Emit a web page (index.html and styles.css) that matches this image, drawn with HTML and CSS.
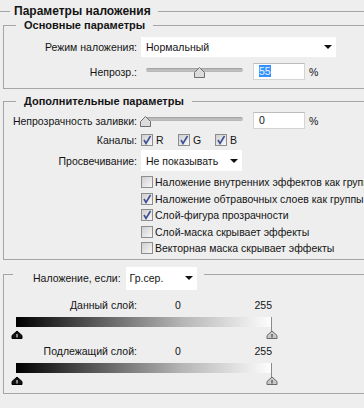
FILE: index.html
```html
<!DOCTYPE html>
<html lang="ru">
<head>
    <meta charset="UTF-8">
    <meta name="viewport" content="width=device-width, initial-scale=1.0">
    <title>Параметры наложения</title>
    <link rel="stylesheet" href="styles.css">
</head>
<body>
<div class="panel">

<div class="title"><span>Параметры наложения</span></div>

<fieldset class="group group-main">
    <legend>Основные параметры</legend>
    <div class="row row-mode">
        <span class="lbl">Режим наложения:</span>
        <div class="select select-mode">Нормальный<i class="arrow"></i></div>
    </div>
    <div class="row row-num">
        <span class="lbl">Непрозр.:</span>
        <div class="slider">
            <div class="track"></div>
            <svg class="knob" style="left: 52px" width="13" height="12" viewBox="0 0 13 12"><path d="M1.5 11.5 V6.5 L6.5 1.5 L11.5 6.5 V11.5 Z" fill="#dcdcdc" stroke="#6f6f6f"/></svg>
        </div>
        <div class="field"><span class="hl">55</span></div>
        <span class="pct">%</span>
    </div>
</fieldset>

<fieldset class="group group-extra">
    <legend>Дополнительные параметры</legend>
    <div class="row row-num">
        <span class="lbl">Непрозрачность заливки:</span>
        <div class="slider">
            <div class="track"></div>
            <svg class="knob" style="left: -2px" width="13" height="12" viewBox="0 0 13 12"><path d="M1.5 11.5 V6.5 L6.5 1.5 L11.5 6.5 V11.5 Z" fill="#dcdcdc" stroke="#6f6f6f"/></svg>
        </div>
        <div class="field">0</div>
        <span class="pct">%</span>
    </div>
    <div class="row row-chan">
        <span class="lbl">Каналы:</span>
        <div class="channels">
            <span class="chan"><span class="check on"><svg width="10" height="10" viewBox="0 0 10 10"><path d="M2 5 L4 8.5 L8.5 1" fill="none" stroke="#3e4f93" stroke-width="1.6"/></svg></span>R</span>
            <span class="chan"><span class="check on"><svg width="10" height="10" viewBox="0 0 10 10"><path d="M2 5 L4 8.5 L8.5 1" fill="none" stroke="#3e4f93" stroke-width="1.6"/></svg></span>G</span>
            <span class="chan"><span class="check on"><svg width="10" height="10" viewBox="0 0 10 10"><path d="M2 5 L4 8.5 L8.5 1" fill="none" stroke="#3e4f93" stroke-width="1.6"/></svg></span>B</span>
        </div>
    </div>
    <div class="row row-knock">
        <span class="lbl">Просвечивание:</span>
        <div class="select select-knock">Не показывать<i class="arrow"></i></div>
    </div>
    <ul class="options">
        <li><span class="check"></span>Наложение внутренних эффектов как группы</li>
        <li><span class="check on"><svg width="10" height="10" viewBox="0 0 10 10"><path d="M2 5 L4 8.5 L8.5 1" fill="none" stroke="#3e4f93" stroke-width="1.6"/></svg></span>Наложение обтравочных слоев как группы</li>
        <li><span class="check on"><svg width="10" height="10" viewBox="0 0 10 10"><path d="M2 5 L4 8.5 L8.5 1" fill="none" stroke="#3e4f93" stroke-width="1.6"/></svg></span>Слой-фигура прозрачности</li>
        <li><span class="check"></span>Слой-маска скрывает эффекты</li>
        <li><span class="check"></span>Векторная маска скрывает эффекты</li>
    </ul>
</fieldset>

<fieldset class="group group-blend">
    <legend>
        <span class="blend-lbl">Наложение, если:</span>
        <span class="select select-gray">Гр.сер.<i class="arrow"></i></span>
    </legend>

    <div class="row row-layer">
        <span class="lbl">Данный слой:</span>
        <div class="nums"><span>0</span><span>255</span></div>
    </div>
    <div class="ramp"></div>
    <div class="ramp-knobs">
        <svg class="rk" style="left: -5px" width="12" height="9" viewBox="0 0 12 9"><path d="M1 8.5 V5.5 L6 1 L11 5.5 V8.5 Z" fill="#111" stroke="#000"/><path d="M6 4 V7.5" stroke="#fff"/></svg>
        <svg class="rk" style="left: 250px" width="12" height="9" viewBox="0 0 12 9"><path d="M1 8.5 V5.5 L6 1 L11 5.5 V8.5 Z" fill="#c9c9c9" stroke="#6a6a6a"/><path d="M6 4 V7.5" stroke="#333"/></svg>
    </div>

    <div class="row row-layer row-under">
        <span class="lbl">Подлежащий слой:</span>
        <div class="nums"><span>0</span><span>255</span></div>
    </div>
    <div class="ramp"></div>
    <div class="ramp-knobs">
        <svg class="rk" style="left: -5px" width="12" height="9" viewBox="0 0 12 9"><path d="M1 8.5 V5.5 L6 1 L11 5.5 V8.5 Z" fill="#111" stroke="#000"/><path d="M6 4 V7.5" stroke="#fff"/></svg>
        <svg class="rk" style="left: 250px" width="12" height="9" viewBox="0 0 12 9"><path d="M1 8.5 V5.5 L6 1 L11 5.5 V8.5 Z" fill="#c9c9c9" stroke="#6a6a6a"/><path d="M6 4 V7.5" stroke="#333"/></svg>
    </div>
</fieldset>

</div>
</body>
</html>
```

FILE: styles.css
```css
body {
    margin: 0;
    background-color: #eeeeee;
    color: #141414;
    font-family: "Liberation Sans", Arial, sans-serif;
    font-size: 10.5px;
    overflow: hidden;
}
.panel {
    width: 420px;
}
.title {
    display: flex;
    align-items: center;
    height: 14px;
    padding-top: 4px;
    font-size: 12px;
    font-weight: bold;
}
.title::before {
    content: "";
    width: 10px;
    border-top: 1px solid #a5a5a5;
}
.title::after {
    content: "";
    flex: 1;
    border-top: 1px solid #a5a5a5;
}
.title span {
    padding: 0 7px 0 4px;
}
.group {
    margin: 0 0 0 3px;
    padding: 0;
    min-width: 0;
    border: 1px solid #a5a5a5;
}
.group legend {
    margin-left: 12px;
    padding: 0 8px;
    line-height: 14px;
    font-size: 11px;
    font-weight: bold;
}
.row {
    display: flex;
    align-items: center;
}
.lbl {
    width: 133px;
    text-align: right;
    margin-right: 4px;
    white-space: nowrap;
}

/* основные */
.group-main {
    padding-bottom: 8px;
}
.row-mode {
    margin-top: 5px;
    height: 20px;
}
.row-num {
    height: 17px;
    margin-top: 6px;
}
.select {
    display: flex;
    align-items: center;
    justify-content: space-between;
    box-sizing: border-box;
    background: #fff;
    padding: 0 4px 0 5px;
}
.select-mode {
    width: 195px;
    height: 20px;
}
.arrow {
    width: 0;
    height: 0;
    border-left: 4px solid transparent;
    border-right: 4px solid transparent;
    border-top: 4px solid #111;
}
.slider {
    position: relative;
    width: 104px;
    height: 17px;
}
.track {
    margin: 5px 0 0 5px;
    width: 97px;
    height: 4px;
    border-radius: 3px;
    background: linear-gradient(#9a9a9a, #c4c4c4 50%, #b4b4b4);
}
.knob {
    position: absolute;
    top: 3px;
}
.field {
    box-sizing: border-box;
    width: 52px;
    height: 17px;
    margin-left: 8px;
    padding-left: 5px;
    line-height: 15px;
    background: #fff;
    border: 1px solid #d4d4d4;
    border-top-color: #bcbcbc;
}
.hl {
    background: #3391ff;
    color: #e8f2ff;
}
.pct {
    margin-left: 4px;
}

/* дополнительные */
.group-extra {
    margin-top: 5px;
    padding-bottom: 2px;
}
.group-extra .row-num {
    margin-top: 4px;
}
.row-chan {
    height: 14px;
    margin-top: 4px;
}
.channels {
    display: flex;
}
.chan {
    display: flex;
    align-items: center;
    width: 37px;
}
.check {
    display: inline-flex;
    align-items: center;
    justify-content: center;
    box-sizing: border-box;
    width: 12px;
    height: 12px;
    margin-right: 3px;
    border: 1px solid #8d8d8d;
    background: linear-gradient(135deg, #cfcfcf, #f7f7f7);
}
.row-knock {
    height: 21px;
    margin-top: 3px;
}
.select-knock {
    width: 101px;
    height: 21px;
}
.options {
    list-style: none;
    margin: 3px 0 0 137px;
    padding: 0;
}
.options li {
    display: flex;
    align-items: center;
    height: 16.5px;
    white-space: nowrap;
}
.options .check {
    margin-right: 2px;
}

/* наложение, если */
.group-blend {
    padding-bottom: 8px;
}
.group-blend legend {
    display: flex;
    align-items: center;
    margin-left: 9px;
    padding: 7px 7px 0 20px;
    font-size: 10.5px;
    font-weight: normal;
}
.blend-lbl {
    margin-right: 5px;
}
.select-gray {
    width: 71px;
    height: 23px;
    padding-left: 4px;
}
.row-layer {
    height: 14px;
    margin-top: 8px;
}
.row-under {
    margin-top: 5px;
}
.nums {
    display: flex;
    justify-content: space-between;
    width: 97px;
    padding-left: 34px;
}
.ramp {
    position: relative;
    width: 255px;
    height: 10px;
    margin: 5px 0 0 12px;
    background: linear-gradient(to right, #000, #3a3a3a 20%, #b5b5b5 65%, #fdfdfd);
    border-right: 1px solid #8a8a8a;
}
.ramp::after {
    content: "";
    position: absolute;
    right: -1px;
    top: 100%;
    height: 5px;
    border-right: 1px solid #8a8a8a;
}
.ramp-knobs {
    position: relative;
    width: 256px;
    height: 9px;
    margin: 3px 0 0 12px;
}
.rk {
    position: absolute;
    top: 0;
}
```
